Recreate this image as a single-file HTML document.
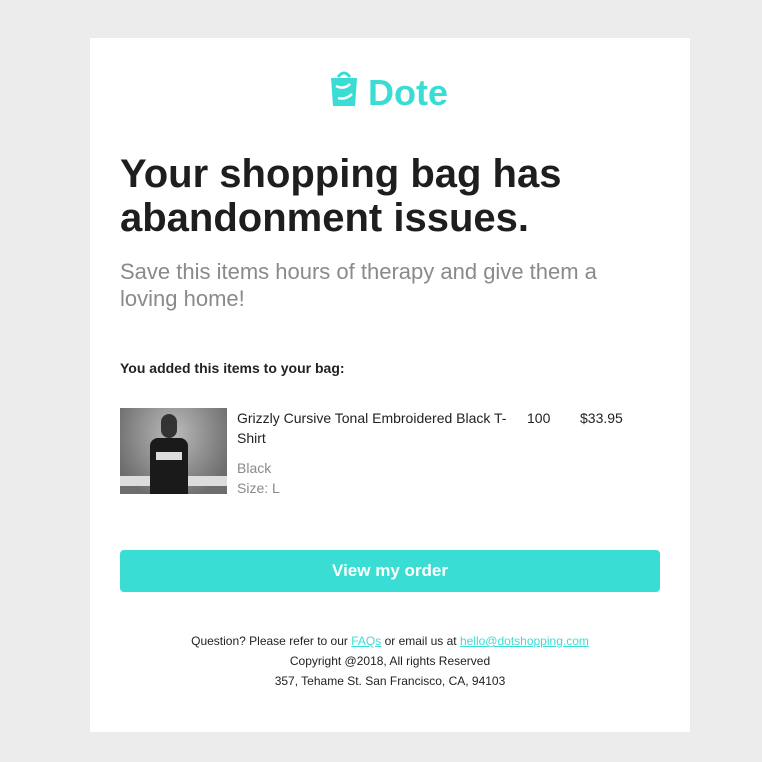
<!DOCTYPE html>
<html><head><meta charset="utf-8"><style>
*{margin:0;padding:0;box-sizing:border-box}
body{width:762px;height:762px;background:#ececec;font-family:"Liberation Sans",sans-serif;position:relative;overflow:hidden}
.card{position:absolute;left:90px;top:38px;width:600px;height:694px;background:#fff}
.abs{position:absolute}
h1{position:absolute;left:30px;top:114px;font-size:40px;line-height:44px;font-weight:bold;color:#1e1e1e;width:540px}
.sub{position:absolute;left:30px;top:220px;font-size:22px;line-height:27px;color:#8a8a8a;width:490px}
.added{position:absolute;left:30px;top:322px;font-size:14px;font-weight:bold;color:#222}
.img{position:absolute;left:30px;top:370px;width:107px;height:86px;background:radial-gradient(ellipse at 50% 30%,#bbb,#6d6d6d 80%);overflow:hidden}
.name{position:absolute;left:147px;top:370px;width:280px;font-size:14px;line-height:20px;color:#222}
.meta{position:absolute;left:147px;top:420px;font-size:14px;line-height:20px;color:#8a8a8a}
.qty{position:absolute;left:437px;top:370px;font-size:14px;line-height:20px;color:#222}
.price{position:absolute;left:490px;top:370px;font-size:14px;line-height:20px;color:#222}
.btn{position:absolute;left:30px;top:512px;width:540px;height:42px;background:#39ddd4;border-radius:4px;color:#fff;font-weight:bold;font-size:17px;text-align:center;line-height:42px}
.foot{position:absolute;left:0;top:593px;width:600px;text-align:center;font-size:12px;line-height:20px;color:#222}
.foot a{color:#39ddd4}
</style></head><body>
<div class="card">
 <svg class="abs" style="left:240px;top:32px" width="125" height="38" viewBox="0 0 125 38">
  <path d="M8 7 Q14 -1 20 7" stroke="#39ddd4" stroke-width="3" fill="none"/>
  <path d="M1 8 H27 L25 36 H3 Z" fill="#39ddd4"/>
  <path d="M6 16 Q14 20 20 14 M8 28 Q16 30 22 24" stroke="#fff" stroke-width="2.5" fill="none"/>
  <text x="38" y="35" font-family="Liberation Sans,sans-serif" font-weight="bold" font-size="36" fill="#39ddd4">Dote</text>
 </svg>
 <h1>Your shopping bag has abandonment issues.</h1>
 <div class="sub">Save this items hours of therapy and give them a loving home!</div>
 <div class="added">You added this items to your bag:</div>
 <div class="img">
  <div class="abs" style="left:0;top:68px;width:107px;height:10px;background:#ddd"></div>
  <div class="abs" style="left:30px;top:30px;width:38px;height:56px;background:#1a1a1a;border-radius:8px 8px 0 0"></div>
  <div class="abs" style="left:41px;top:6px;width:16px;height:24px;background:#333;border-radius:8px"></div>
  <div class="abs" style="left:36px;top:44px;width:26px;height:8px;background:#ddd"></div>
 </div>
 <div class="name">Grizzly Cursive Tonal Embroidered Black T-Shirt</div>
 <div class="meta">Black<br>Size: L</div>
 <div class="qty">100</div>
 <div class="price">$33.95</div>
 <div class="btn">View my order</div>
 <div class="foot">Question? Please refer to our <a href="#">FAQs</a> or email us at <a href="#">hello@dotshopping.com</a><br>Copyright @2018, All rights Reserved<br>357, Tehame St. San Francisco, CA, 94103</div>
</div>
</body></html>
